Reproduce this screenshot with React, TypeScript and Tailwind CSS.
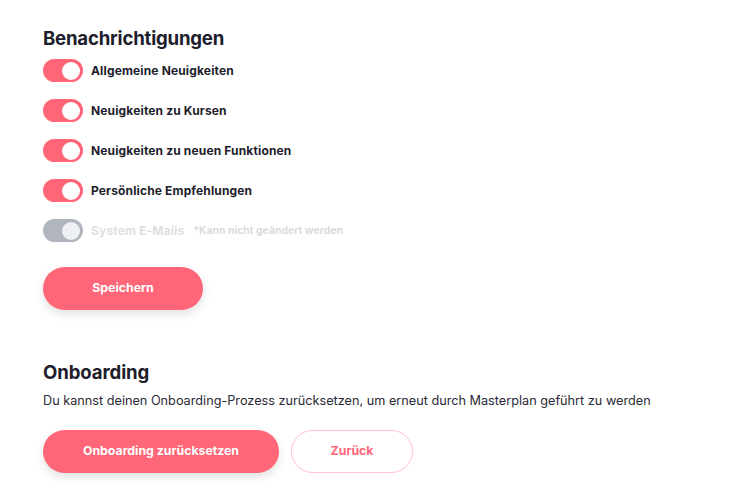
import React, { useState } from "react";

const items = [
  { label: "Allgemeine Neuigkeiten", on: true },
  { label: "Neuigkeiten zu Kursen", on: true },
  { label: "Neuigkeiten zu neuen Funktionen", on: true },
  { label: "Persönliche Empfehlungen", on: true },
];

function Toggle({ on, disabled, onClick }: { on: boolean; disabled?: boolean; onClick?: () => void }) {
  const track = disabled ? "bg-[#b1b5bd]" : on ? "bg-[#ff6677]" : "bg-[#d1d5db]";
  return (
    <button
      type="button"
      onClick={disabled ? undefined : onClick}
      className={`relative w-[40px] h-[23px] rounded-full shrink-0 ${track}`}
    >
      <span
        className={`absolute top-[2.5px] w-[18px] h-[18px] rounded-full ${disabled ? "bg-[#eef0f3]" : "bg-white"} ${on ? "left-[19px]" : "left-[3px]"}`}
      />
    </button>
  );
}

export default function App() {
  const [state, setState] = useState(items.map((i) => i.on));

  return (
    <div className="w-[741px] h-[487px] bg-white pl-[43px] pt-[26px] text-[#1d1d2b]" style={{ fontFamily: "Inter, 'Noto Sans', sans-serif" }}>
      <h2 className="text-[18.6px] font-bold leading-[24px] tracking-[-0.2px]">Benachrichtigungen</h2>
      <div className="mt-[9px] flex flex-col gap-[17px]">
        {items.map((item, i) => (
          <div key={item.label} className="flex items-center gap-[8px]">
            <Toggle on={state[i]} onClick={() => setState(state.map((s, j) => (j === i ? !s : s)))} />
            <span className="text-[12px] font-bold tracking-[0.15px]">{item.label}</span>
          </div>
        ))}
        <div className="flex items-center gap-[8px]">
          <Toggle on disabled />
          <span className="text-[12px] font-bold tracking-[0.15px] text-[#dedfe3]">System E-Mails</span>
          <span className="ml-[1px] text-[10.5px] font-semibold text-[#d6d7db]">*Kann nicht geändert werden</span>
        </div>
      </div>
      <button className="mt-[25px] w-[160px] h-[43px] rounded-full bg-[#ff6677] text-white text-[12.3px] font-bold shadow-[0_4px_10px_rgba(0,0,0,0.12)]">
        Speichern
      </button>

      <h2 className="mt-[50px] text-[18.6px] font-bold leading-[24px] tracking-[-0.1px]">Onboarding</h2>
      <p className="mt-[8px] text-[12.7px] leading-[18px] text-[#2a2a36]">
        Du kannst deinen Onboarding-Prozess zurücksetzen, um erneut durch Masterplan geführt zu werden
      </p>
      <div className="mt-[20px] flex gap-[12px]">
        <button className="w-[236px] h-[43px] rounded-full bg-[#ff6677] text-white text-[12.3px] font-bold shadow-[0_4px_10px_rgba(0,0,0,0.12)]">
          Onboarding zurücksetzen
        </button>
        <button className="w-[122px] h-[43px] rounded-full border border-[#ffc2c9] bg-white text-[#ff6677] text-[12.3px] font-bold">
          Zurück
        </button>
      </div>
    </div>
  );
}
